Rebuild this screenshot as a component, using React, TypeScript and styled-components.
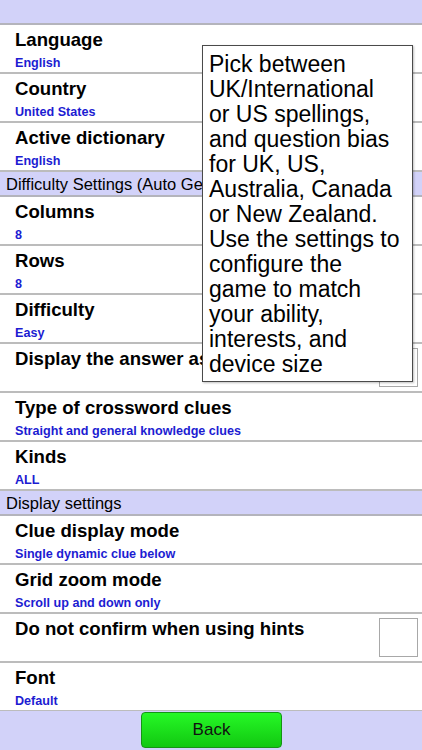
import styled, { createGlobalStyle } from 'styled-components';

const GlobalStyle = createGlobalStyle`
  html, body {
    margin: 0;
    padding: 0;
    background: #ffffff;
  }
  body {
    font-family: "Liberation Sans", Arial, sans-serif;
  }
`;

const Screen = styled.div`
  position: relative;
  width: 422px;
  height: 750px;
  display: flex;
  flex-direction: column;
  overflow: hidden;
  background: #ffffff;
`;

const TopBar = styled.div`
  height: 23px;
  flex-shrink: 0;
  background: #d2d2f9;
  border-bottom: 2px solid #b4b4bc;
`;

const List = styled.div`
  flex: 1;
  overflow: hidden;
`;

const Row = styled.div`
  height: 47px;
  box-sizing: content-box;
  display: flex;
  align-items: center;
  justify-content: space-between;
  padding: 0 4px 0 15px;
  border-bottom: 2px solid #bcbcbc;
`;

const RowText = styled.div`
  display: flex;
  flex-direction: column;
  align-self: flex-start;
  padding-top: 4px;
`;

const Title = styled.div`
  font-size: 18.6px;
  line-height: 22px;
  font-weight: bold;
  color: #000;
  white-space: nowrap;
`;

const Value = styled.div`
  font-size: 12.6px;
  line-height: 15px;
  font-weight: bold;
  color: #1c1cd2;
  margin-top: 5px;
  white-space: nowrap;
`;

const Check = styled.div`
  width: 37px;
  height: 37px;
  border: 1px solid #a8a8a8;
  background: #fff;
  flex-shrink: 0;
`;

const SectionHeader = styled.div`
  height: 23px;
  box-sizing: content-box;
  background: #d2d2f9;
  border-bottom: 2px solid #b4b4bc;
  padding-left: 6px;
  font-size: 16.5px;
  line-height: 25px;
  color: #000;
  white-space: nowrap;
  overflow: hidden;
`;

const BottomBar = styled.div`
  height: 39px;
  flex-shrink: 0;
  background: #d2d2f9;
  display: flex;
  justify-content: center;
  align-items: flex-start;
  padding-top: 1px;
  box-sizing: border-box;
`;

const BackButton = styled.button`
  width: 141px;
  height: 36px;
  margin-left: 1px;
  border: 1px solid #159415;
  border-radius: 4px;
  background: linear-gradient(#26f826, #11c811);
  font-family: "Liberation Sans", Arial, sans-serif;
  font-size: 17px;
  color: #111;
  padding: 0;
`;

// help tip that sits over the settings list
const Tip = styled.div`
  position: absolute;
  left: 202px;
  top: 45px;
  width: 211px;
  height: 337px;
  box-sizing: border-box;
  background: #fff;
  border: 1px solid #4a4a4a;
  box-shadow: 1px 1px 2px rgba(0, 0, 0, 0.25);
  padding: 6px 6px 4px;
  font-size: 23px;
  line-height: 25px;
  color: #000;
`;

const TipLine = styled.div`
  white-space: nowrap;
`;

type Setting = { title: string; value?: string; check?: boolean };

const general: Setting[] = [
  { title: 'Language', value: 'English' },
  { title: 'Country', value: 'United States' },
  { title: 'Active dictionary', value: 'English' },
];

const difficulty: Setting[] = [
  { title: 'Columns', value: '8' },
  { title: 'Rows', value: '8' },
  { title: 'Difficulty', value: 'Easy' },
  { title: 'Display the answer as you type', check: true },
  { title: 'Type of crossword clues', value: 'Straight and general knowledge clues' },
  { title: 'Kinds', value: 'ALL' },
];

const display: Setting[] = [
  { title: 'Clue display mode', value: 'Single dynamic clue below' },
  { title: 'Grid zoom mode', value: 'Scroll up and down only' },
  { title: 'Do not confirm when using hints', check: true },
  { title: 'Font', value: 'Default' },
];

const tipLines = [
  'Pick between',
  'UK/International',
  'or US spellings,',
  'and question bias',
  'for UK, US,',
  'Australia, Canada',
  'or New Zealand.',
  'Use the settings to',
  'configure the',
  'game to match',
  'your ability,',
  'interests, and',
  'device size',
];

function SettingRow({ s }: { s: Setting }) {
  return (
    <Row>
      <RowText>
        <Title>{s.title}</Title>
        {s.value && <Value>{s.value}</Value>}
      </RowText>
      {s.check && <Check />}
    </Row>
  );
}

export default function App() {
  return (
    <Screen>
      <GlobalStyle />
      <TopBar />
      <List>
        {general.map(s => <SettingRow key={s.title} s={s} />)}
        <SectionHeader>Difficulty Settings (Auto Generated)</SectionHeader>
        {difficulty.map(s => <SettingRow key={s.title} s={s} />)}
        <SectionHeader>Display settings</SectionHeader>
        {display.map(s => <SettingRow key={s.title} s={s} />)}
      </List>
      <BottomBar>
        <BackButton>Back</BackButton>
      </BottomBar>
      <Tip>
        {tipLines.map(l => <TipLine key={l}>{l}</TipLine>)}
      </Tip>
    </Screen>
  );
}
